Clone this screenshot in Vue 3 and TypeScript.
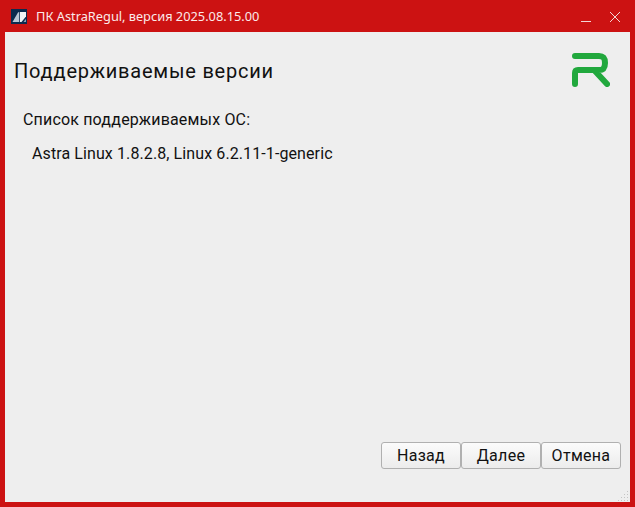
<script setup lang="ts">
const buttons = ['Назад', 'Далее', 'Отмена'];
</script>

<template>
  <div class="window">
    <header class="titlebar">
      <svg class="app-icon" viewBox="0 0 16 15">
        <rect width="16" height="15" fill="#0c2a4e" />
        <path d="M1.5 13 L7 3.5 L8 3 V13 Z" fill="#b9c6d6" />
        <path d="M8.8 3 H15 V7.5 L10.5 13 H8.8 Z" fill="#f2f4f7" />
        <path d="M12.5 13 L15 9.7 V13 Z" fill="#8fa3ba" />
      </svg>
      <span class="title">ПК AstraRegul, версия 2025.08.15.00</span>
      <button class="win-btn">
        <svg viewBox="0 0 12 12" width="12" height="12"><path d="M2 10.5 H12" stroke="#f3d6d6" stroke-width="1" fill="none" /></svg>
      </button>
      <button class="win-btn">
        <svg viewBox="0 0 12 12" width="12" height="12"><path d="M1 1 L11 11 M11 1 L1 11" stroke="#f3d6d6" stroke-width="1" fill="none" /></svg>
      </button>
    </header>

    <main class="body">
      <div class="heading">
        <h1>Поддерживаемые версии</h1>
        <svg class="logo" viewBox="0 0 38 34" width="38" height="34">
          <path
            d="M3 3 H27 C31 3 33 5 33 10 C33 15 31 17 27 17 H6 Q3 17 3 20 V31 M23 18 L35 31"
            fill="none"
            stroke="#21a83d"
            stroke-width="6"
            stroke-linecap="round"
            stroke-linejoin="round"
          />
        </svg>
      </div>
      <p class="label">Список поддерживаемых ОС:</p>
      <p class="value">Astra Linux 1.8.2.8, Linux 6.2.11-1-generic</p>

      <footer class="actions">
        <button v-for="b in buttons" :key="b" class="btn">{{ b }}</button>
      </footer>
      <svg class="grip" viewBox="0 0 11 11" width="11" height="11">
        <g fill="#c4c4c4">
          <rect x="9" y="1" width="1" height="1" />
          <rect x="6" y="4" width="1" height="1" /><rect x="9" y="4" width="1" height="1" />
          <rect x="3" y="7" width="1" height="1" /><rect x="6" y="7" width="1" height="1" /><rect x="9" y="7" width="1" height="1" />
          <rect x="0" y="10" width="1" height="1" /><rect x="3" y="10" width="1" height="1" /><rect x="6" y="10" width="1" height="1" /><rect x="9" y="10" width="1" height="1" />
        </g>
      </svg>
    </main>
  </div>
</template>

<style>
html, body {
  margin: 0;
  overflow: hidden;
}
</style>

<style scoped>
.window {
  width: 635px;
  height: 507px;
  box-sizing: border-box;
  display: flex;
  flex-direction: column;
  background: #cc1212;
  padding: 0 5px 5px;
}

.titlebar {
  height: 32px;
  flex-shrink: 0;
  display: flex;
  align-items: center;
  font-family: "Noto Sans", sans-serif;
  font-size: 12.8px;
  color: #fbe9e9;
}

.app-icon {
  width: 16px;
  height: 15px;
  margin: 1px 9px 0 6px;
}

.title {
  flex: 1;
}

.win-btn {
  width: 30px;
  height: 24px;
  padding: 0;
  border: 0;
  background: none;
  display: flex;
  align-items: center;
  justify-content: center;
}

.win-btn svg {
  margin-top: 1px;
}

.body {
  flex: 1;
  position: relative;
  display: flex;
  flex-direction: column;
  background: #eeeeee;
  font-family: Roboto, sans-serif;
  color: #111111;
  padding: 0 9px 9px 9px;
}

.heading {
  display: flex;
  justify-content: space-between;
  align-items: flex-start;
  padding-top: 21px;
  padding-right: 11px;
}

h1 {
  margin: 6px 0 0;
  font-size: 20px;
  font-weight: 400;
  line-height: 24px;
  letter-spacing: 0.78px;
}

.label {
  margin: 23px 0 0 9px;
  font-size: 16px;
  line-height: 19px;
  letter-spacing: 0.17px;
}

.value {
  margin: 15px 0 0 18px;
  font-size: 16px;
  line-height: 19px;
  letter-spacing: 0.1px;
}

.actions {
  margin-top: auto;
  display: flex;
  justify-content: flex-end;
  padding-bottom: 24px;
}

.btn {
  width: 80px;
  height: 27px;
  padding: 0;
  box-sizing: border-box;
  border: 1px solid #b0b0b0;
  border-radius: 3px;
  background: linear-gradient(#fbfbfb, #ececec);
  font-family: Roboto, sans-serif;
  font-size: 16px;
  letter-spacing: 0.3px;
  color: #111111;
}

.grip {
  position: absolute;
  right: 1px;
  bottom: 1px;
}
</style>
